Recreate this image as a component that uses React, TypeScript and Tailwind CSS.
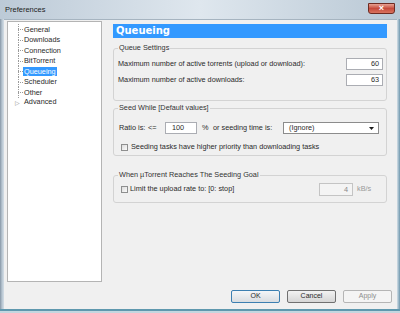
const treeItems = [
  'General',
  'Downloads',
  'Connection',
  'BitTorrent',
  'Queueing',
  'Scheduler',
  'Other',
];

const Checkbox = () => (
  <div className="w-[7px] h-[7px] border border-[#8e8f8f] bg-gradient-to-br from-[#dcdcdc] to-[#fbfbfb] shrink-0" />
);

const TreeRow = ({ label, active }: { label: string; active?: boolean }) => (
  <div className="flex h-[10.5px] items-stretch">
    <div className="w-[10px] shrink-0" />
    <div className="w-[5px] shrink-0 flex flex-col">
      <div className="h-1/2 border-l border-dotted border-[#9a9a9a]" />
      <div className="h-1/2 border-l border-t border-dotted border-[#9a9a9a]" />
    </div>
    <div className="flex items-center">
      <span
        className={
          active
            ? 'bg-[#3399ff] text-white px-[1px] leading-[9px]'
            : 'px-[1px] leading-[9px]'
        }
      >
        {label}
      </span>
    </div>
  </div>
);

export default function App() {
  return (
    <div className="w-[400px] h-[313px] flex flex-col overflow-hidden whitespace-nowrap font-['Liberation_Sans',Arial,sans-serif] text-[7.3px] text-[#2a2a2a]">
      {/* title bar */}
      <div className="h-[19px] shrink-0 flex bg-gradient-to-r from-[#bccad7] via-[#dfe7ee] to-[#b9c8d5]">
        <div className="pl-[5px] pt-[5px] text-[7.5px] text-[#1c1c1c] leading-[10px]">
          Preferences
        </div>
        <div className="ml-auto mr-[5px] mt-[3px] w-[27px] h-[11px] rounded-b-[3px] border border-[#6e2b22] bg-gradient-to-b from-[#e6a193] via-[#c64a3c] to-[#d9735f] flex items-center justify-center text-white text-[9px] font-bold leading-none">
          ×
        </div>
      </div>

      <div className="flex flex-1">
        <div className="w-[4px] bg-gradient-to-r from-[#8797a6] via-[#b7c5d1] to-[#d4dee6]" />

        {/* client area */}
        <div className="flex-1 bg-[#f0f0f0] border-t border-[#a6b4c0] flex flex-col">
          <div className="flex items-start pt-[1px] pl-[3px]">
            {/* tree */}
            <div className="w-[95px] h-[261px] shrink-0 bg-white border border-[#b4b4b4] pt-[2px]">
              {treeItems.map((t) => (
                <TreeRow key={t} label={t} active={t === 'Queueing'} />
              ))}
              <div className="flex h-[10.5px] items-center">
                <div className="w-[7px] shrink-0" />
                <div className="w-[8px] shrink-0 text-[6px] text-[#8a8a8a] leading-none">
                  ▷
                </div>
                <span className="px-[1px]">Advanced</span>
              </div>
            </div>

            {/* panel */}
            <div className="ml-[11px] mt-[3px] w-[274px] shrink-0 flex flex-col">
              <div className="h-[14px] bg-[#3399ff] text-white font-['DejaVu_Sans',sans-serif] font-bold text-[10px] leading-[14px] pl-[3px]">
                Queueing
              </div>

              <fieldset className="mt-[5px] h-[58px] border border-[#d3d3d3] rounded-[3px] pl-[4px] pr-[3px]">
                <legend className="px-[1px] leading-[10px] text-[#333]">Queue Settings</legend>
                <div className="mt-[5px] flex flex-col gap-[4px]">
                  <div className="h-[12px] flex items-center justify-between">
                    <span>Maximum number of active torrents (upload or download):</span>
                    <div className="w-[37px] h-[12px] shrink-0 bg-white border border-[#abadb3] text-right pr-[3px] leading-[10px]">
                      60
                    </div>
                  </div>
                  <div className="h-[12px] flex items-center justify-between">
                    <span>Maximum number of active downloads:</span>
                    <div className="w-[37px] h-[12px] shrink-0 bg-white border border-[#abadb3] text-right pr-[3px] leading-[10px]">
                      63
                    </div>
                  </div>
                </div>
              </fieldset>

              <fieldset className="mt-[2px] h-[53px] border border-[#d3d3d3] rounded-[3px] pl-[4px] pr-[3px]">
                <legend className="px-[1px] leading-[10px] text-[#333]">
                  Seed While [Default values]
                </legend>
                <div className="mt-[9px] h-[12px] flex items-center">
                  <span className="w-[30px] shrink-0 pl-[1px]">Ratio is:</span>
                  <span className="w-[17px] shrink-0">&lt;=</span>
                  <div className="w-[32px] h-[12px] shrink-0 bg-white border border-[#abadb3] pl-[6px] leading-[10px]">
                    100
                  </div>
                  <span className="ml-[5px] w-[11px] shrink-0">%</span>
                  <span className="w-[70px] shrink-0">or seeding time is:</span>
                  <div className="w-[96px] h-[12px] shrink-0 bg-white border border-[#8c8c8c] flex items-center pl-[5px] pr-[4px]">
                    <span className="leading-[10px]">(Ignore)</span>
                    <svg className="ml-auto" width="5" height="3" viewBox="0 0 5 3">
                      <path d="M0 0H5L2.5 3Z" fill="#1a1a1a" />
                    </svg>
                  </div>
                </div>
                <div className="mt-[7px] h-[12px] flex items-center">
                  <div className="ml-[3px]">
                    <Checkbox />
                  </div>
                  <span className="ml-[3px]">
                    Seeding tasks have higher priority than downloading tasks
                  </span>
                </div>
              </fieldset>

              <fieldset className="mt-[14px] h-[33px] border border-[#d3d3d3] rounded-[3px] pl-[4px] pr-[3px]">
                <legend className="px-[1px] leading-[10px] text-[#333]">
                  When µTorrent Reaches The Seeding Goal
                </legend>
                <div className="mt-[3px] h-[13px] flex items-center">
                  <div className="ml-[3px]">
                    <Checkbox />
                  </div>
                  <span className="ml-[2px] flex-1">Limit the upload rate to: [0: stop]</span>
                  <div className="w-[34px] h-[13px] shrink-0 bg-[#f4f4f4] border border-[#c4c4c4] text-right pr-[4px] leading-[11px] text-[#8a8a8a]">
                    4
                  </div>
                  <span className="ml-[4px] w-[26px] shrink-0 text-[#9a9a9a]">kB/s</span>
                </div>
              </fieldset>
            </div>
          </div>

          {/* buttons */}
          <div className="mt-[8px] flex justify-end gap-[7px] pr-[5px]">
            <div className="w-[49px] h-[13px] rounded-[2px] border border-[#3c7fb1] bg-gradient-to-b from-[#f4f6f8] to-[#d9dde1] flex items-center justify-center text-[7px]">
              OK
            </div>
            <div className="w-[49px] h-[13px] rounded-[2px] border border-[#707070] bg-gradient-to-b from-[#f2f2f2] to-[#d6d6d6] flex items-center justify-center text-[7px]">
              Cancel
            </div>
            <div className="w-[49px] h-[13px] rounded-[2px] border border-[#b5b5b5] bg-[#f4f4f4] flex items-center justify-center text-[7px] text-[#8d8d8d]">
              Apply
            </div>
          </div>
        </div>

        <div className="w-[3px] bg-gradient-to-r from-[#d3dee6] to-[#6e97ad]" />
      </div>

      <div className="h-[4px] shrink-0 border-t-2 border-[#5f98ae] bg-[#c4d7e0]" />
    </div>
  );
}
